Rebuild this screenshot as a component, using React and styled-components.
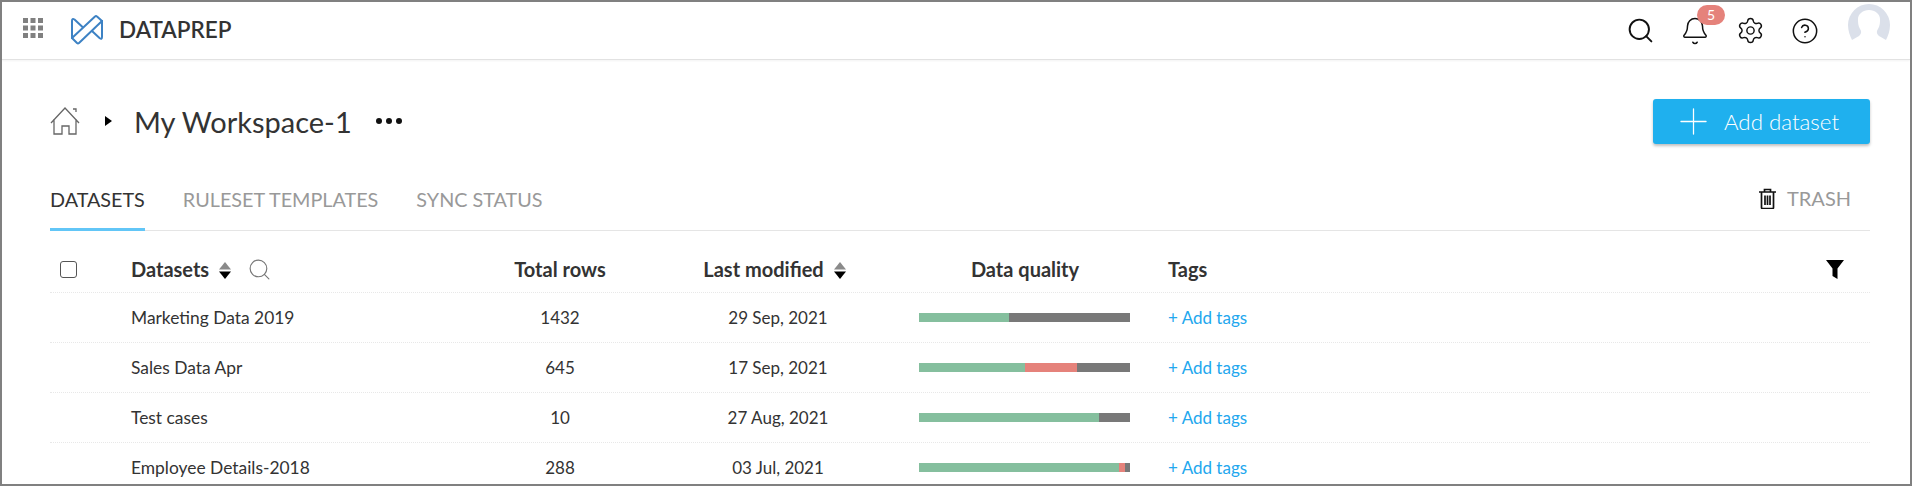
import React from "react";
import styled, { createGlobalStyle } from "styled-components";
import { Search, Bell, Settings, CircleHelp, Plus } from "lucide-react";

const Global = createGlobalStyle`
  html, body { margin: 0; padding: 0; background: #fff; }
  body { font-family: Lato, "Liberation Sans", sans-serif; color: #333; }
  * { box-sizing: border-box; }
`;
const Frame = styled.div`
  width: 1912px; height: 486px; border: 2px solid #808080; overflow: hidden; background: #fff;
`;
const TopBar = styled.header`
  height: 58px; display: flex; align-items: center; padding: 0 20px 0 21px;
  border-bottom: 1px solid #e2e2e2; box-shadow: 0 1px 2px rgba(0,0,0,.05);
`;
const AppGrid = styled.svg`
  width: 20px; height: 20px; margin-top: -5px; flex: none;
`;
const Logo = styled.svg`
  width: 34px; height: 30px; margin-left: 27px; margin-top: -2px; flex: none;
`;
const Brand = styled.div`
  font-size: 22.5px; font-weight: 600; color: #333; margin-left: 15px; margin-top: -3px;
`;
const Actions = styled.div`
  margin-left: auto; display: flex; align-items: center; gap: 31px;
`;
const ActionIcon = styled.span`
  position: relative; display: flex; width: 24px; height: 24px; align-items: center; justify-content: center; color: #111;
  svg { flex: none; }
`;
const Badge = styled.span`
  position: absolute; top: -14px; left: 14px; width: 28px; height: 20px; border-radius: 10px;
  background: #e5827b; color: #fff; font-size: 14px; display: flex; align-items: center; justify-content: center;
`;
const Avatar = styled.svg`
  width: 42px; height: 38px; margin-top: -15px; flex: none;
`;
const Main = styled.main`
  padding: 0 40px 0 48px;
`;
const TitleRow = styled.div`
  height: 110px; display: flex; align-items: center; padding-top: 12px;
`;
const Caret = styled.span`
  width: 0; height: 0; border-left: 7px solid #000; border-top: 5.5px solid transparent; border-bottom: 5.5px solid transparent;
  margin: 0 22px 0 25px;
`;
const Title = styled.h1`
  font-size: 29px; font-weight: 400; margin: 0; color: #333;
`;
const Dots = styled.span`
  display: flex; gap: 4px; margin-left: 24px;
  i { width: 6px; height: 6px; border-radius: 50%; background: #111; display: block; }
`;
const AddButton = styled.button`
  margin-left: auto; width: 217px; height: 45px; border: 0; border-radius: 3px; background: #1fb0ee; color: #fff;
  font: 300 22.3px Lato, sans-serif; display: flex; align-items: center; padding: 0 0 0 19px; gap: 9px;
  box-shadow: 0 2px 3px rgba(0,0,0,.25);
  svg { flex: none; }
`;
const TabBar = styled.nav`
  height: 61px; display: flex; align-items: flex-end; gap: 38px; border-bottom: 1px solid #e5e5e5;
`;
const Tab = styled.span`
  height: 47px; font-size: 19.8px; line-height: 30px; text-transform: uppercase;
  color: ${p => (p.$active ? "#333" : "#999")};
  border-bottom: 3px solid ${p => (p.$active ? "#62c6f7" : "transparent")};
  margin-bottom: -1px;
`;
const Trash = styled.span`
  margin-left: auto; height: 47px; display: flex; align-items: flex-start; gap: 11px; font-size: 20px; line-height: 30px;
  color: #999; padding-right: 19px;
`;
const TrashIcon = styled.svg`
  width: 17px; height: 21px; margin-top: 5px; flex: none;
`;
const Row = styled.div`
  display: grid; grid-template-columns: 81px 329px 200px 236px 272px 1fr; align-items: center; height: 50px;
  border-bottom: 1px dotted #e8e8e8; font-size: 17px; color: #333;
`;
const HeadRow = styled(Row)`
  height: 62px; font-weight: 700; font-size: 20px; padding-top: 15px;
`;
const Check = styled.span`
  width: 17px; height: 17px; border: 1px solid #555; border-radius: 3px; margin-left: 10px; display: block;
`;
const HeadName = styled.div`
  display: flex; align-items: center;
  justify-content: ${p => (p.$center ? "center" : "flex-start")};
  padding-right: ${p => (p.$center ? "7px" : "0")};
`;
const NameCell = styled.div`
  font-size: 17.4px;
`;
const Center = styled.div`
  text-align: center;
`;
const SortWrap = styled.svg`
  width: 12px; height: 17px; margin-left: 10px; flex: none; margin-top: 3px;
`;
const HeadSearch = styled(Search)`
  margin-left: 16px; color: #777; flex: none;
`;
const QualityHead = styled.div`
  text-align: center; padding-right: 14px;
`;
const Bar = styled.div`
  width: 211px; height: 9px; margin-left: 23px; display: flex; background: #787878;
`;
const Seg = styled.span`
  display: block; height: 100%; background: ${p => p.$c};
`;
const TagLink = styled.a`
  color: #22a7ee;
`;
const TagsHead = styled.div`
  display: flex; justify-content: space-between; align-items: center; padding-right: 26px;
`;

const Sort = () => (
  <SortWrap viewBox="0 0 12 17">
    <path d="M6 0l6 7.500H0z" fill="#8a8a8a" />
    <path d="M6 17l6-7.500H0z" fill="#000" />
  </SortWrap>
);

const rows = [
  { n: "Marketing Data 2019", r: "1432", d: "29 Sep, 2021", g: 90, e: 0 },
  { n: "Sales Data Apr", r: "645", d: "17 Sep, 2021", g: 106, e: 52 },
  { n: "Test cases", r: "10", d: "27 Aug, 2021", g: 180, e: 0 },
  { n: "Employee Details-2018", r: "288", d: "03 Jul, 2021", g: 200, e: 6 },
];

export default function App() {
  return (
    <Frame>
      <Global />
      <TopBar>
        <AppGrid viewBox="0 0 20 20" fill="#808080">
          {[0, 7.5, 15].flatMap(y => [0, 7.5, 15].map(x => <rect key={x + "-" + y} x={x} y={y} width="5" height="5" />))}
        </AppGrid>
        <Logo viewBox="0 0 34 30" fill="none" stroke="#3d82c4" strokeWidth="2" strokeLinejoin="round" strokeLinecap="round">
          <path d="M12.500 12 4.500 4.500Q2 3 2 6V23L7 28Q8 29 9 28L32 6" />
          <path d="M32 6V22Q32 25 29.500 23L22 16" />
          <path d="M32 6 27 1.500Q26 .5 25 1.500L2 23" />
        </Logo>
        <Brand>DATAPREP</Brand>
        <Actions>
          <ActionIcon><Search size={29} strokeWidth={1.600} /></ActionIcon>
          <ActionIcon><Bell size={30} strokeWidth={1.200} /><Badge>5</Badge></ActionIcon>
          <ActionIcon><Settings size={29} strokeWidth={1.200} /></ActionIcon>
          <ActionIcon><CircleHelp size={28} strokeWidth={1.300} /></ActionIcon>
          <Avatar viewBox="0 0 42 38">
            <path d="M21 0a21 21 0 0 1 21 21c0 6-2 11-4 15l-7-4c-2-2-3-4-1-7 2-3 2-7 2-10 0-5-5-9-11-9s-11 4-11 9c0 3 0 7 2 10 2 3 1 5-1 7l-7 4C2 32 0 27 0 21A21 21 0 0 1 21 0z" fill="#dbe0ea" />
          </Avatar>
        </Actions>
      </TopBar>
      <Main>
        <TitleRow>
          <svg width="30" height="28" viewBox="0 0 30 28" fill="none" stroke="#666" strokeWidth="1.300">
            <path d="M1 16 15 1l14 15M4 12v15h8v-8h7v8h7V12" />
            <path d="M23 2h3v3" />
          </svg>
          <Caret />
          <Title>My Workspace-1</Title>
          <Dots><i /><i /><i /></Dots>
          <AddButton><Plus size={43} strokeWidth={0.700} />Add dataset</AddButton>
        </TitleRow>
        <TabBar>
          <Tab $active>Datasets</Tab>
          <Tab>Ruleset templates</Tab>
          <Tab>Sync status</Tab>
          <Trash>
            <TrashIcon viewBox="0 0 17 21" fill="none" stroke="#111" strokeWidth="1.700">
              <path d="M0 4h17M5.500 4V1.500h6V4M2.500 4v15.500a1 1 0 0 0 1 1h10a1 1 0 0 0 1-1V4M6 7.500v9.500M8.500 7.500v9.500M11 7.500v9.500" />
            </TrashIcon>
            TRASH
          </Trash>
        </TabBar>
        <HeadRow>
          <Check />
          <HeadName>
            Datasets<Sort />
            <HeadSearch size={25} strokeWidth={1.100} />
          </HeadName>
          <Center>Total rows</Center>
          <HeadName $center>Last modified<Sort /></HeadName>
          <QualityHead>Data quality</QualityHead>
          <TagsHead>
            Tags
            <svg width="18" height="19" viewBox="0 0 18 19"><path d="M0 0h18l-6.500 8.500V19l-5-3V8.500z" fill="#000" /></svg>
          </TagsHead>
        </HeadRow>
        {rows.map(r => (
          <Row key={r.n}>
            <span />
            <NameCell>{r.n}</NameCell>
            <Center>{r.r}</Center>
            <Center>{r.d}</Center>
            <Bar>
              <Seg $c="#85bf9e" style={{ width: r.g }} />
              {r.e > 0 && <Seg $c="#e5827b" style={{ width: r.e }} />}
            </Bar>
            <TagLink>+ Add tags</TagLink>
          </Row>
        ))}
      </Main>
    </Frame>
  );
}
